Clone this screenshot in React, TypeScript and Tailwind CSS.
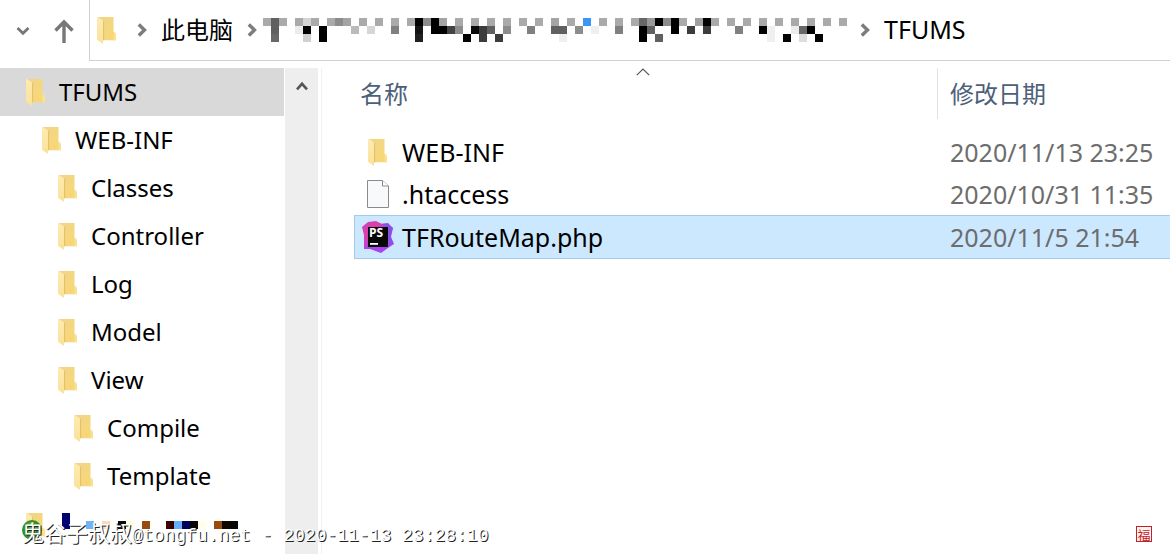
import React from 'react';

function FolderIcon() {
  return (
    <svg width="20" height="27" viewBox="0 0 20 27" className="shrink-0" aria-hidden="true">
      <defs>
        <linearGradient id="folderBody" x1="0" x2="1" y1="0" y2="1">
          <stop offset="0" stopColor="#f0d58c" />
          <stop offset="1" stopColor="#f8d873" />
        </linearGradient>
        <linearGradient id="folderFlap" x1="0" x2="0" y1="0" y2="1">
          <stop offset="0" stopColor="#fdebb4" />
          <stop offset="1" stopColor="#fce197" />
        </linearGradient>
      </defs>
      <path d="M1 0H16.5V14.5L19 17V23.3H1Z" fill="url(#folderBody)" />
      <path d="M6.6 4V23.3" stroke="#e3c069" strokeWidth="1" />
      <path d="M0 0H1L6 3.4V27L0 22.8Z" fill="url(#folderFlap)" />
      <path d="M16.5 14.5L19 17V23.3H16.5Z" fill="#fbe190" />
    </svg>
  );
}

function FileIcon() {
  return (
    <svg width="22" height="28" viewBox="0 0 22 28" aria-hidden="true">
      <path d="M0.5 0.5H15.5L21.5 6V27.5H0.5Z" fill="#f8f9fb" stroke="#8a8a8a" />
      <path d="M15.5 0.5V6H21.5" fill="#fff" stroke="#8a8a8a" />
    </svg>
  );
}

function PhpStormIcon() {
  return (
    <svg width="32" height="32" viewBox="0 0 32 32" aria-hidden="true">
      <defs>
        <linearGradient id="stormPink" x1="0" x2="0.8" y1="0" y2="1">
          <stop offset="0" stopColor="#c93fd0" />
          <stop offset="0.35" stopColor="#e03fa4" />
          <stop offset="0.8" stopColor="#a345f1" />
        </linearGradient>
        <linearGradient id="stormViolet" x1="0" x2="0" y1="0" y2="1">
          <stop offset="0" stopColor="#8a4fe8" />
          <stop offset="1" stopColor="#b040ee" />
        </linearGradient>
      </defs>
      <path d="M17 3L26 2L31 7L29 16L32 23L26 27L19 32L8 28L2 28L3 22L6 12Z" fill="url(#stormViolet)" />
      <path d="M0 6L6 1L14 0L20 3L24 10L8 28L2 27L2 14Z" fill="url(#stormPink)" />
      <path d="M24 3L31 7L28 14L31 22L24 26Z" fill="#8a50e4" />
      <rect x="6" y="6" width="20" height="20" fill="#080808" />
      <text x="7" y="16" className="fill-white font-['Open_Sans',sans-serif] text-[12px] font-bold">PS</text>
      <rect x="8" y="22" width="8" height="1.8" fill="#fff" />
    </svg>
  );
}

function Separator() {
  return (
    <svg width="10" height="14" viewBox="0 0 10 14" className="shrink-0" aria-hidden="true">
      <path d="M1.8 1.5L7.5 7L1.8 12.5" fill="none" stroke="#7c7c7c" strokeWidth="3.4" />
    </svg>
  );
}

type Cell = [number, string];

const pathCells: Cell[][] = [
  [
    [0, '#aaa'], [1, '#606060'], [2, '#aaa'], [4, '#aaa'], [5, '#d4d4d4'], [6, '#aaa'], [8, '#aaa'], [9, '#8c8c8c'],
    [10, '#a4a4a4'], [12, '#aaa'], [14, '#aaa'], [16, '#aaa'], [18, '#aaa'], [19, '#000'], [20, '#8c8c8c'], [21, '#000'],
    [22, '#a4a4a4'], [24, '#aaa'], [26, '#aaa'], [28, '#aaa'], [30, '#aaa'], [32, '#aaa'], [34, '#aaa'], [36, '#a4a4a4'],
    [38, '#aaa'], [40, '#3c96f6'], [42, '#aaa'], [44, '#aaa'], [46, '#aaa'], [47, '#686868'], [48, '#999'], [49, '#000'],
    [50, '#8c8c8c'], [51, '#000'], [52, '#aaa'], [54, '#a0a0a0'], [55, '#000'], [56, '#aaa'], [58, '#aaa'], [60, '#aaa'],
    [62, '#aaa'], [64, '#aaa'], [66, '#aaa'], [68, '#aaa'], [70, '#aaa'], [72, '#aaa'],
  ],
  [
    [1, '#606060'], [4, '#ececec'], [5, '#000'], [7, '#000'], [11, '#bbb'], [13, '#d6d6d6'], [16, '#808080'], [19, '#141414'],
    [21, '#000'], [22, '#000'], [23, '#444'], [24, '#8c8c8c'], [26, '#0a0a0a'], [27, '#3c3c3c'], [28, '#606060'], [30, '#8c8c8c'],
    [33, '#808080'], [36, '#606060'], [37, '#606060'], [39, '#8c8c8c'], [41, '#efefef'], [44, '#808080'], [47, '#000'],
    [48, '#606060'], [51, '#000'], [53, '#3c3c3c'], [55, '#3c3c3c'], [59, '#808080'], [62, '#000'], [63, '#efefef'],
    [66, '#ececec'], [67, '#686868'], [68, '#000'],
  ],
  [
    [1, '#686868'], [5, '#d0d0d0'], [7, '#000'], [19, '#202020'], [25, '#000'], [27, '#3c3c3c'], [29, '#3c3c3c'], [37, '#efefef'],
    [47, '#000'], [49, '#606060'], [63, '#efefef'], [65, '#000'], [67, '#ddd'], [69, '#000'],
  ],
];

const treeCells: Cell[][] = [
  [[0, '#000070']],
  [
    [0, '#000070'], [3, '#70b4f4'], [5, '#fbd9bd'], [7, '#0a0a0a'], [8, '#ffffe0'], [10, '#984a10'], [13, '#380000'],
    [14, '#66b0fa'], [15, '#000058'], [16, '#050505'], [17, '#ffffe6'], [19, '#984a10'], [20, '#100500'], [21, '#050505'],
  ],
];

function Mosaic({ rows, columns }: { rows: Cell[][]; columns: number }) {
  return (
    <svg
      width={columns * 8}
      height={rows.length * 8}
      viewBox={`0 0 ${columns * 8} ${rows.length * 8}`}
      className="shrink-0"
      shapeRendering="crispEdges"
      aria-hidden="true"
    >
      {rows.map((row, y) =>
        row.map(([x, fill]) => <rect key={`${x}-${y}`} x={x * 8} y={y * 8} width="8" height="8" fill={fill} />),
      )}
    </svg>
  );
}

const indents = ['pl-[26px]', 'pl-[42px]', 'pl-[58px]', 'pl-[74px]'];

const tree = [
  { name: 'TFUMS', level: 0 },
  { name: 'WEB-INF', level: 1 },
  { name: 'Classes', level: 2 },
  { name: 'Controller', level: 2 },
  { name: 'Log', level: 2 },
  { name: 'Model', level: 2 },
  { name: 'View', level: 2 },
  { name: 'Compile', level: 3 },
  { name: 'Template', level: 3 },
];

const files = [
  { name: 'WEB-INF', date: '2020/11/13 23:25', icon: <FolderIcon /> },
  { name: '.htaccess', date: '2020/10/31 11:35', icon: <FileIcon /> },
  { name: 'TFRouteMap.php', date: '2020/11/5 21:54', icon: <PhpStormIcon />, selected: true },
];

export default function App() {
  return (
    <div className="relative flex h-screen flex-col overflow-hidden bg-white font-['Noto_Sans','Noto_Sans_CJK_SC',sans-serif] text-black">
      <header className="flex h-[61px] shrink-0">
        <div className="flex w-[89px] shrink-0 items-center gap-6 pl-4">
          <button type="button" aria-label="Recent locations">
            <svg width="14" height="10" viewBox="0 0 14 10" aria-hidden="true">
              <path d="M1.5 2L7 7.3L12.5 2" fill="none" stroke="#777" strokeWidth="2.8" />
            </svg>
          </button>
          <button type="button" aria-label="Up">
            <svg width="20" height="24" viewBox="0 0 20 24" aria-hidden="true">
              <path d="M10 24V3M1.5 11.5L10 3L18.5 11.5" fill="none" stroke="#777" strokeWidth="3.4" />
            </svg>
          </button>
        </div>
        <nav className="flex min-w-0 grow items-center border-b border-l border-[#d0d0d0] pl-[7px] text-[25px] whitespace-nowrap">
          <FolderIcon />
          <div className="flex items-center gap-[14px] pl-[20px]">
            <Separator />
            <a href="#computer" className="text-2xl">此电脑</a>
            <Separator />
          </div>
          <div className="pr-[13px] pl-[6px]">
            <Mosaic rows={pathCells} columns={73} />
          </div>
          <div className="flex items-center gap-[14px]">
            <Separator />
            <a href="#tfums">TFUMS</a>
          </div>
        </nav>
      </header>

      <div className="flex min-h-0 grow pt-[7px]">
        <aside className="flex w-[322px] shrink-0 border-r border-[#f0f0f0]">
          <ul className="w-[284px] shrink-0">
            {tree.map((node) => (
              <li key={node.name}>
                <button
                  type="button"
                  className={`flex h-12 w-full items-center gap-[13px] text-left text-2xl ${indents[node.level]} ${
                    node.level === 0 ? 'bg-[#d9d9d9]' : ''
                  }`}
                >
                  <FolderIcon />
                  {node.name}
                </button>
              </li>
            ))}
            <li className="flex h-12 items-start gap-4 pt-[13px] pl-[26px]">
              <FolderIcon />
              <Mosaic rows={treeCells} columns={22} />
            </li>
          </ul>
          <div className="ml-px w-[33px] bg-[#eeeeee]">
            <button type="button" aria-label="Scroll up" className="flex h-9 w-full items-center justify-center">
              <svg width="12" height="10" viewBox="0 0 12 10" aria-hidden="true">
                <path d="M1 8.3L6 2.8L11 8.3" fill="none" stroke="#555" strokeWidth="2.6" />
              </svg>
            </button>
          </div>
        </aside>

        <main className="min-w-0 grow pl-8">
          <table className="w-full border-separate border-spacing-0 text-left text-[25px] leading-8">
            <thead>
              <tr className="text-2xl text-[#4c607a]">
                <th className="relative h-[51px] pt-px pl-[6px] font-normal">
                  名称
                  <svg width="14" height="8" viewBox="0 0 14 8" className="absolute top-0 left-1/2 -ml-[10px]" aria-hidden="true">
                    <path d="M0.8 7.2L7 1L13.2 7.2" fill="none" stroke="#555" strokeWidth="1.2" />
                  </svg>
                </th>
                <th className="w-[233px] border-l border-[#e2e2e2] pt-px pl-3 font-normal">修改日期</th>
              </tr>
            </thead>
            <tbody>
              <tr aria-hidden="true">
                <td colSpan={2} className="h-3" />
              </tr>
              {files.map((file) => (
                <tr key={file.name} className={file.selected ? 'bg-[#cce8ff]' : ''}>
                  <td
                    className={
                      file.selected ? 'h-11 border-y border-l border-[#a5cbe6] pl-[7px]' : 'h-[42px] pl-2'
                    }
                  >
                    <div className="flex items-center gap-2">
                      <span className="flex w-8 justify-center">{file.icon}</span>
                      {file.name}
                    </div>
                  </td>
                  <td className={`pl-[13px] text-[#6d6d6d] ${file.selected ? 'border-y border-[#a5cbe6]' : ''}`}>
                    {file.date}
                  </td>
                </tr>
              ))}
            </tbody>
          </table>
        </main>
      </div>

      <svg width="20" height="20" viewBox="0 0 20 20" className="absolute bottom-[14px] left-[22px]" aria-hidden="true">
        <circle cx="10" cy="10" r="10" fill="#35911f" />
        <circle cx="9" cy="8" r="6" fill="#55a83c" />
      </svg>
      <p className="absolute bottom-1 left-[22px] font-['Liberation_Mono',monospace] text-lg whitespace-nowrap text-white [text-shadow:1px_1px_0_#222]">
        <span className="font-['Noto_Sans_CJK_SC',sans-serif] text-[22px]">鬼谷子叔叔</span>
        @tongfu.net - 2020-11-13 23:28:10
      </p>
      <div className="absolute right-[18px] bottom-3 flex size-4 items-center justify-center border border-[#c4202a] bg-[#fff3ef] font-['Noto_Sans_CJK_SC',sans-serif] text-[13px] leading-none text-[#c4202a]">
        福
      </div>
    </div>
  );
}
